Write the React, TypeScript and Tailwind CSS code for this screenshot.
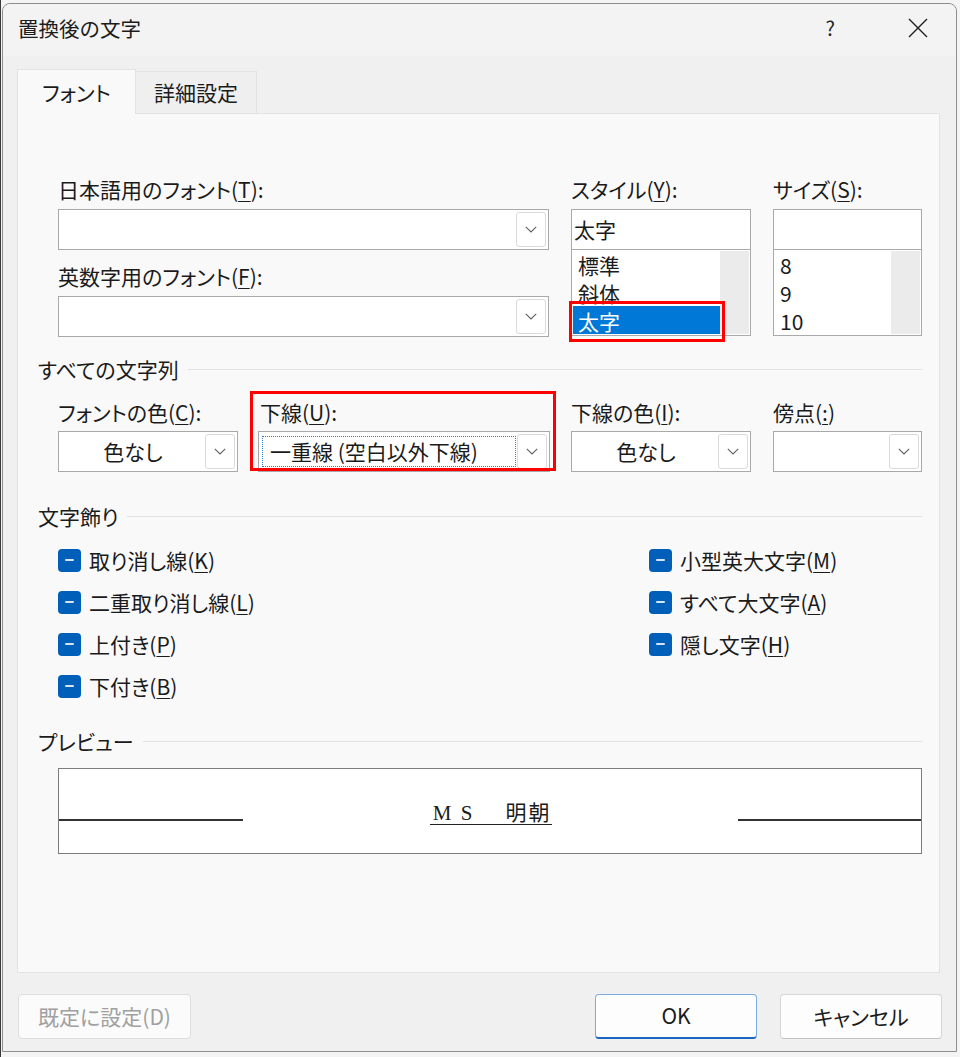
import React from "react";

const FONT = "font-['Noto_Sans_CJK_JP','Noto_Sans',sans-serif]";

function Chevron() {
  return (
    <svg width="12" height="7" viewBox="0 0 12 7" fill="none">
      <path d="M0.8 0.8L6 6L11.2 0.8" stroke="#5f5f5f" strokeWidth="1.1" />
    </svg>
  );
}

function DropButton() {
  return (
    <div className="flex h-[35px] w-[30px] shrink-0 items-center justify-center rounded-[3px] border border-[#dadada] bg-white">
      <Chevron />
    </div>
  );
}

function Label({ pre, k, post }: { pre: string; k: string; post: string }) {
  return (
    <div className="h-[24px] leading-[24px] whitespace-nowrap">
      {pre}
      <span className="underline underline-offset-[3px] decoration-1">{k}</span>
      {post}
    </div>
  );
}

function Combo({
  text,
  center,
  focused,
}: {
  text?: string;
  center?: boolean;
  focused?: boolean;
}) {
  return (
    <div className="flex h-[41px] items-center border border-[#a9a9a9] bg-white p-[2px]">
      <div className="flex h-full flex-1 items-center">
        {focused ? (
          <div className="ml-[1px] mr-[1px] flex h-[31px] flex-1 items-center border border-dotted border-[#2b7bd1] pl-[7px] whitespace-nowrap">
            {text}
          </div>
        ) : (
          <div className={`flex-1 whitespace-nowrap ${center ? "text-center" : "pl-[6px]"}`}>{text}</div>
        )}
      </div>
      <DropButton />
    </div>
  );
}

function ListBox({
  items,
  selected,
  children,
}: {
  items: string[];
  selected?: number;
  children?: React.ReactNode;
}) {
  return (
    <div className="relative flex h-[86px] border border-[#a9a9a9] border-t-0 bg-white">
      <div className="flex flex-1 flex-col">
        {items.map((it, i) => (
          <div
            key={it}
            className={`ml-[1px] h-[28px] pl-[5px] pt-[1px] leading-[28px] ${
              i === selected ? "bg-[#0078d7] text-white" : ""
            }`}
          >
            {it}
          </div>
        ))}
      </div>
      <div className="my-[1px] mr-[1px] w-[29px] bg-[#ebebeb]" />
      {children}
    </div>
  );
}

function GroupHeader({ title }: { title: string }) {
  return (
    <div className="flex h-[24px] items-center">
      <span className="leading-[24px]">{title}</span>
      <div className="ml-[9px] h-px flex-1 bg-[#e2e2e2]" />
    </div>
  );
}

function Check({ pre, k }: { pre: string; k: string }) {
  return (
    <div className="flex h-[42px] items-center">
      <div className="flex h-[23px] w-[23px] items-center justify-center rounded-[4px] bg-[#005fb8]">
        <div className="h-[2px] w-[9px] rounded bg-[#d6e4f5]" />
      </div>
      <div className="ml-[8px] leading-[24px] whitespace-nowrap">
        {pre}(<span className="underline underline-offset-[3px] decoration-1">{k}</span>)
      </div>
    </div>
  );
}

export default function App() {
  return (
    <div className={`h-[1057px] w-[960px] overflow-hidden border-l border-[#3a3a3a] bg-[#f4f4f4] ${FONT} text-[21px] text-[#1b1b1b] [font-feature-settings:'palt']`}>
      <div className="ml-[1px] mt-[3px] flex h-[1049px] w-[955px] flex-col rounded-t-[8px] border border-[#8e8e8e] bg-[#f0f0f0]">
        {/* title bar */}
        <div className="flex h-[52px] shrink-0 items-center rounded-t-[8px] bg-[#f3f3f3] pb-[4px] pl-[15px] pr-[28px]">
          <div className="text-[20.5px] leading-none [font-feature-settings:normal]">置換後の文字</div>
          <div className="ml-auto mr-[73px] text-[20px] leading-none text-[#222]">?</div>
          <svg width="20" height="20" viewBox="0 0 20 20" fill="none">
            <path d="M1 1L19 19M19 1L1 19" stroke="#1f1f1f" strokeWidth="1.4" />
          </svg>
        </div>

        {/* body */}
        <div className="flex flex-1 flex-col pl-[14px] pt-[13px]">
          {/* tabs */}
          <div className="relative z-10 flex items-end">
            <div className="-mb-px flex h-[45px] w-[119px] items-center justify-center border border-b-0 border-[#e3e3e3] bg-[#f9f9f9] pt-[1px]">
              フォント
            </div>
            <div className="flex h-[42px] w-[121px] items-center justify-center border border-b-0 border-l-0 border-[#e3e3e3] bg-[#efefef]">
              詳細設定
            </div>
          </div>

          {/* tab panel */}
          <div className="flex h-[860px] w-[923px] flex-col border border-[#e3e3e3] bg-[#f9f9f9] pl-[20px] pr-[17px] pt-[63px]">
            {/* fonts / style / size */}
            <div className="flex gap-[22px] pl-[20px]">
              <div className="w-[491px]">
                <Label pre="日本語用のフォント(" k="T" post="):" />
                <div className="mt-[8px]">
                  <Combo />
                </div>
                <div className="mt-[14px]">
                  <Label pre="英数字用のフォント(" k="F" post="):" />
                </div>
                <div className="mt-[8px]">
                  <Combo />
                </div>
              </div>
              <div className="w-[180px]">
                <Label pre="スタイル(" k="Y" post="):" />
                <div className="mt-[8px] flex h-[41px] items-center border border-[#a9a9a9] bg-white pl-[2px]">太字</div>
                <ListBox items={["標準", "斜体", "太字"]} selected={2}>
                  <div className="pointer-events-none absolute left-[-3px] top-[51px] h-[41px] w-[156px] border-[3px] border-[#ff0000]" />
                </ListBox>
              </div>
              <div className="w-[149px]">
                <Label pre="サイズ(" k="S" post="):" />
                <div className="mt-[8px] h-[41px] border border-[#a9a9a9] bg-white" />
                <ListBox items={["8", "9", "10"]} />
              </div>
            </div>

            {/* all text */}
            <div className="mt-[20px]">
              <GroupHeader title="すべての文字列" />
            </div>
            <div className="mt-[19px] flex pl-[20px]">
              <div className="w-[180px]">
                <Label pre="フォントの色(" k="C" post="):" />
                <div className="mt-[7px]">
                  <Combo text="色なし" center />
                </div>
              </div>
              <div className="relative ml-[20px] w-[292px]">
                <div className="pl-[2px]">
                  <Label pre="下線(" k="U" post="):" />
                </div>
                <div className="mt-[7px]">
                  <Combo text="一重線 (空白以外下線)" focused />
                </div>
                <div className="pointer-events-none absolute left-[-8px] top-[-9px] h-[80px] w-[306px] border-[3px] border-[#ff0000]" />
              </div>
              <div className="ml-[21px] w-[180px]">
                <Label pre="下線の色(" k="I" post="):" />
                <div className="mt-[7px]">
                  <Combo text="色なし" center />
                </div>
              </div>
              <div className="ml-[22px] w-[149px]">
                <Label pre="傍点(" k=":" post=")" />
                <div className="mt-[7px]">
                  <Combo />
                </div>
              </div>
            </div>

            {/* effects */}
            <div className="mt-[32px]">
              <GroupHeader title="文字飾り" />
            </div>
            <div className="mt-[11px] grid grid-cols-[591px_1fr] pl-[20px]">
              <div>
                <Check pre="取り消し線" k="K" />
                <Check pre="二重取り消し線" k="L" />
                <Check pre="上付き" k="P" />
                <Check pre="下付き" k="B" />
              </div>
              <div>
                <Check pre="小型英大文字" k="M" />
                <Check pre="すべて大文字" k="A" />
                <Check pre="隠し文字" k="H" />
              </div>
            </div>

            {/* preview */}
            <div className="mt-[22px]">
              <GroupHeader title="プレビュー" />
            </div>
            <div className="ml-[20px] mt-[15px] flex h-[86px] items-start justify-between border border-[#7c7c7c] bg-white">
              <div className="mt-[50px] h-[2px] w-[184px] bg-[#333]" />
              <div className="mt-[34px] flex items-end border-b border-[#222] pb-[1px] text-[21px] leading-[20px] font-['Liberation_Serif','Noto_Sans_CJK_JP',serif] whitespace-nowrap [font-feature-settings:normal]">
                <span className="inline-block w-[25px] text-center">M</span>
                <span className="inline-block w-[24px] text-center">S</span>
                <span className="inline-block w-[27px]">&nbsp;</span>
                <span className="tracking-[2px]">明朝</span>
              </div>
              <div className="mt-[50px] h-[2px] w-[183px] bg-[#333]" />
            </div>
          </div>

          {/* buttons */}
          <div className="mt-[21px] flex w-[925px] items-center">
            <div className="ml-[1px] flex h-[45px] w-[173px] items-center justify-center rounded-[4px] border border-[#dedede] bg-[#fbfbfb] text-[#a0a0a0]">
              既定に設定(D)
            </div>
            <div className="ml-auto flex h-[45px] w-[162px] items-center justify-center rounded-[4px] border border-[#7eaee0] border-b-2 border-b-[#1a66c2] bg-[#fdfdfd]">
              OK
            </div>
            <div className="ml-[23px] flex h-[45px] w-[162px] items-center justify-center rounded-[4px] border border-[#d6d6d6] border-b-[#c2c2c2] bg-[#fdfdfd]">
              キャンセル
            </div>
          </div>
        </div>
      </div>
    </div>
  );
}
